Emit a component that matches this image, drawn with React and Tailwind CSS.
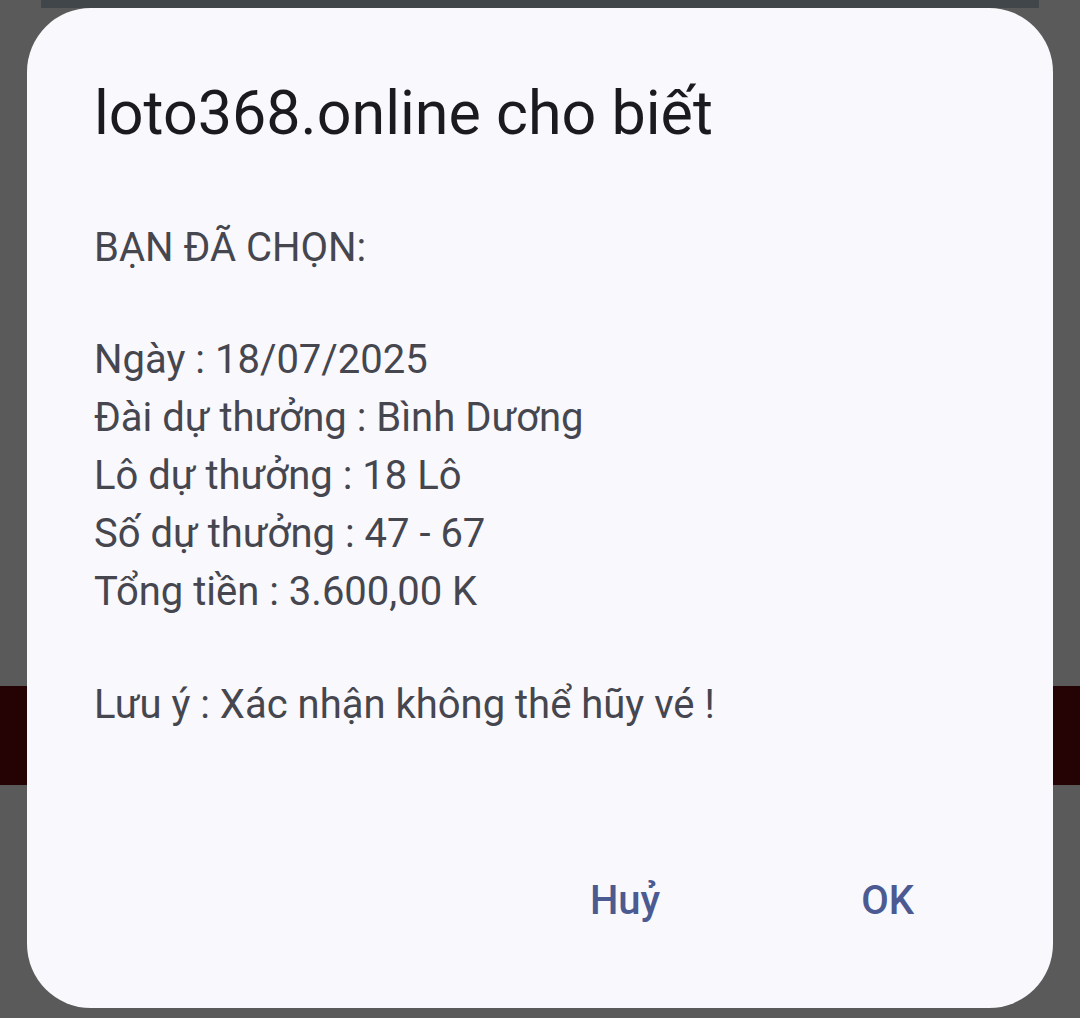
import React from "react";

const lines = [
  "Ngày : 18/07/2025",
  "Đài dự thưởng : Bình Dương",
  "Lô dự thưởng : 18 Lô",
  "Số dự thưởng : 47 - 67",
  "Tổng tiền : 3.600,00 K",
];

const App = () => {
  return (
    <div
      className="relative h-[1018px] w-full overflow-hidden bg-[#5a5a5a]"
      style={{ fontFamily: "Roboto, 'Noto Sans', sans-serif" }}
    >
      {/* dimmed page behind the dialog */}
      <div className="flex flex-col">
        <div className="mx-[41px] h-[8px] bg-[#41464b]"></div>
        <div className="h-[678px]"></div>
        <div className="h-[99px] bg-[#250204]"></div>
      </div>

      {/* alert dialog */}
      <div className="absolute left-[27px] top-[8px] flex h-[1000px] w-[1026px] flex-col rounded-[64px] bg-[#f8f8fd] pl-[67px] pr-[67px]">
        <h1 className="mt-[69px] text-[61px] leading-[72px] text-[#1b1b1f]">
          loto368.online cho biết
        </h1>

        <div className="mt-[70px] text-[40px] leading-[58px] text-[#46464f]">
          <div>BẠN ĐÃ CHỌN:</div>
          <div className="h-[54px]"></div>
          {lines.map((line, idx) => (
            <div key={idx}>{line}</div>
          ))}
          <div className="h-[55px]"></div>
          <div>Lưu ý : Xác nhận không thể hũy vé !</div>
        </div>

        <div className="mt-auto mb-[83px] flex justify-end gap-[201px] pr-[72px] text-[40px] font-medium leading-[48px] text-[#4c5a92]">
          <button>Huỷ</button>
          <button>OK</button>
        </div>
      </div>
    </div>
  );
};

export default App;
